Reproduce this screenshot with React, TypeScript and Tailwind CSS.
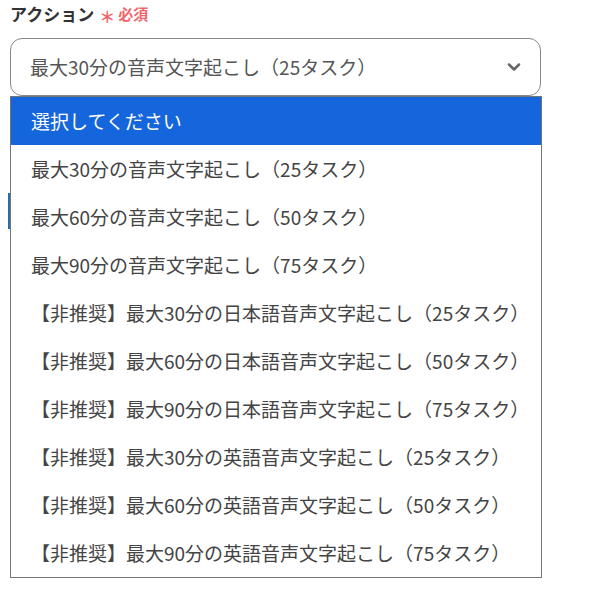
import { ChevronDown } from "lucide-react";

const options = [
  "最大30分の音声文字起こし（25タスク）",
  "最大60分の音声文字起こし（50タスク）",
  "最大90分の音声文字起こし（75タスク）",
  "【非推奨】最大30分の日本語音声文字起こし（25タスク）",
  "【非推奨】最大60分の日本語音声文字起こし（50タスク）",
  "【非推奨】最大90分の日本語音声文字起こし（75タスク）",
  "【非推奨】最大30分の英語音声文字起こし（25タスク）",
  "【非推奨】最大60分の英語音声文字起こし（50タスク）",
  "【非推奨】最大90分の英語音声文字起こし（75タスク）",
];

const App = () => {
  return (
    <div className="w-[594px] h-[600px] bg-white font-['Noto_Sans_CJK_JP',sans-serif] text-[#333]">
      <div className="relative pl-[10px] pr-[53px]">
        <div className="flex items-center gap-[5px] h-[27px]">
          <span className="text-[17px] font-bold text-[#333]">アクション</span>
          <span className="text-[15px] text-[#f0656b] flex items-center gap-[3px] font-bold">
            <span className="text-[16px] leading-none mt-[5px]">＊</span>
            <span className="mt-[2px]">必須</span>
          </span>
        </div>

        <div className="mt-[11px] h-[58px] rounded-[12px] border border-[#888] flex items-center justify-between pl-[19px] pr-[16px]">
          <span className="text-[19px] text-[#555]">最大30分の音声文字起こし（25タスク）</span>
          <ChevronDown size={20} strokeWidth={3} className="text-[#666]" />
        </div>

        <div className="absolute left-[8px] top-[193px] w-[4px] h-[36px] border-l-2 border-[#2a6ea8] bg-[#eef2f6]" />

        <div className="absolute left-[10px] top-[96px] w-[532px] border border-[#767676] bg-white">
          <div className="h-[48px] flex items-center pl-[20px] bg-[#1565dc] text-white text-[19px]">
            選択してください
          </div>
          {options.map((o) => (
            <div key={o} className="h-[48px] flex items-center pl-[20px] text-[19px] text-[#444]">
              {o}
            </div>
          ))}
        </div>
      </div>
    </div>
  );
};

export default App;
